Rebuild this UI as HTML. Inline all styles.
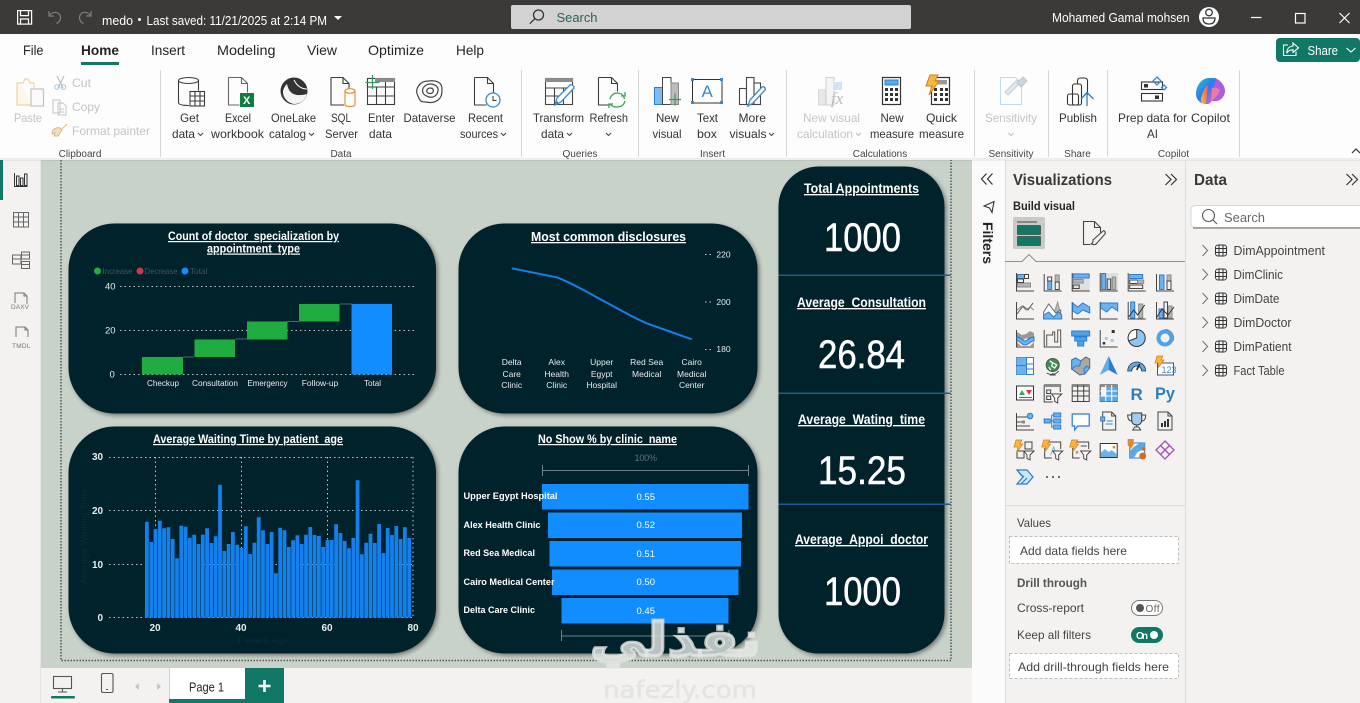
<!DOCTYPE html>
<html lang="en"><head><meta charset="utf-8"><title>medo - Power BI Desktop</title>
<style>
html,body{margin:0;padding:0;width:1360px;height:703px;overflow:hidden;background:#f3f2f1}
svg{display:block}
text{font-family:"Liberation Sans",sans-serif;fill:#323130;font-size:12px}
.m text{font-size:14px;fill:#252423}
.r text{font-size:12px;fill:#333;}
.d text{fill:#c4c4c4}
.gl text{font-size:10px;fill:#444;text-anchor:middle}
.k{fill:none;stroke:#444;stroke-width:1}
.bl{fill:#a9d3f2;stroke:#2b7cd3;stroke-width:1}
.bb{fill:#6db2ea;stroke:#2b7cd3;stroke-width:1}
.gr{fill:#b5b5b5;stroke:#8a8a8a;stroke-width:1}
.t{font-weight:bold;fill:#fff;text-decoration:underline;text-anchor:start}
.n{fill:#fff;font-size:40px;stroke:#fff;stroke-width:.5}
.w{fill:#e6ecee;font-size:8.5px;text-anchor:middle}
.grid{stroke:#b9c6ca;stroke-width:1;stroke-dasharray:1.5 3;fill:none}
.row text{font-size:12.5px;fill:#444}
</style></head><body>
<svg width="1360" height="703" viewBox="0 0 1360 703" xmlns="http://www.w3.org/2000/svg">
<defs>
<filter id="sh" x="-5%" y="-5%" width="112%" height="112%"><feDropShadow dx="2" dy="2" stdDeviation="2" flood-color="#000" flood-opacity=".42"/></filter>
<linearGradient id="cp" x1="0" y1="0" x2="1" y2="1"><stop offset="0" stop-color="#1fc3d8"/><stop offset=".45" stop-color="#2b7de9"/><stop offset=".75" stop-color="#b660e0"/><stop offset="1" stop-color="#f0788c"/></linearGradient>
<linearGradient id="cp2" x1="0" y1="1" x2="1" y2="0"><stop offset="0" stop-color="#f5c33c"/><stop offset=".5" stop-color="#f08a3c"/><stop offset="1" stop-color="#e0568c"/></linearGradient>
</defs>

<!-- backgrounds -->
<rect width="1360" height="703" fill="#f3f2f1"/>
<rect x="41" y="160" width="931" height="508" fill="#c8d2c9"/>
<rect x="972" y="160" width="33" height="543" fill="#fbfbfb"/>
<rect x="1005" y="160" width="180" height="543" fill="#f3f2f1"/>
<rect x="1005" y="160" width="1" height="543" fill="#dedddc"/>
<rect x="1185" y="160" width="1" height="543" fill="#dedddc"/>
<rect x="40" y="160" width="1" height="543" fill="#e4e4e2"/>

<!-- title bar -->
<rect width="1360" height="34" fill="#3b3a39"/>
<g fill="none" stroke="#fff" stroke-width="1.2"><rect x="17.6" y="10.6" width="14" height="13.5"/><path d="M20.5 10.6v5h8v-5M20.5 24v-5h8v5"/></g>
<g fill="none" stroke="#7c7b7a" stroke-width="1.3"><path d="M49 11v5h5M49.5 15.5c3-4 8-4 10-1s1 7-3 9"/><path d="M91 11v5h-5M90.5 15.5c-3-4-8-4-10-1s-1 7 3 9"/></g>
<text x="102" y="25" style="fill:#fff;font-size:12.5px" textLength="31" lengthAdjust="spacingAndGlyphs">medo</text>
<circle cx="139.500" cy="19.500" r="1.500" fill="#fff"/>
<text x="146.500" y="25" style="fill:#fff;font-size:12.5px" textLength="180.500" lengthAdjust="spacingAndGlyphs">Last saved: 11/21/2025 at 2:14 PM</text>
<path d="M334 16h8l-4 4z" fill="#fff"/>
<rect x="511" y="5" width="400" height="24" rx="2" fill="#d2d2d2"/>
<g fill="none" stroke="#333" stroke-width="1.300"><circle cx="538.500" cy="15" r="5"/><path d="M534.800 18.700l-5 5"/></g>
<text x="556.500" y="22" style="fill:#2b6157;font-size:13px" textLength="41" lengthAdjust="spacingAndGlyphs">Search</text>
<text x="1052" y="22" style="fill:#fff;font-size:12.5px" textLength="137.500" lengthAdjust="spacingAndGlyphs">Mohamed Gamal mohsen</text>
<circle cx="1209" cy="17" r="10" fill="#fff"/>
<g fill="none" stroke="#333" stroke-width="1.300"><circle cx="1209" cy="12.500" r="3.300"/><path d="M1203 18h12c0 5-3 6-6 6s-6-1-6-6z"/></g>
<g fill="none" stroke="#fff" stroke-width="1.200"><path d="M1251 17.500h10.500"/><rect x="1295.500" y="13.500" width="9.500" height="9.500"/><path d="M1339.500 13l10 10M1349.500 13l-10 10"/></g>

<!-- ribbon -->
<rect y="34" width="1360" height="126" fill="#fdfdfd"/>
<rect y="158" x="0" width="1360" height="3" fill="#000" opacity=".06"/>
<g class="m">
<text x="23" y="55" textLength="20.500" lengthAdjust="spacingAndGlyphs">File</text>
<text x="81" y="55" textLength="38" lengthAdjust="spacingAndGlyphs" style="font-weight:bold">Home</text>
<text x="151" y="55" textLength="34" lengthAdjust="spacingAndGlyphs">Insert</text>
<text x="217" y="55" textLength="58.500" lengthAdjust="spacingAndGlyphs">Modeling</text>
<text x="307" y="55" textLength="30" lengthAdjust="spacingAndGlyphs">View</text>
<text x="368" y="55" textLength="56" lengthAdjust="spacingAndGlyphs">Optimize</text>
<text x="456" y="55" textLength="28" lengthAdjust="spacingAndGlyphs">Help</text>
</g>
<rect x="81" y="62" width="38" height="3" fill="#117865"/>
<rect x="1276" y="38" width="84" height="24" rx="4" fill="#117865"/>
<g fill="none" stroke="#fff" stroke-width="1.100"><path d="M1288 45h-4.500v10.500h12.500v-4"/><path d="M1293 43l5.500 4.800-5.500 4.500v-2.500c-3 0-5 .8-6.200 3.500 0-4.500 2.500-7 6.200-7.300z"/><path d="M1346.500 48l4.500 4 4.500-4"/></g>
<text x="1307.500" y="55" style="fill:#fff;font-size:13px" textLength="30.500" lengthAdjust="spacingAndGlyphs">Share</text>
<g fill="#d6d6d5"><rect x="160" y="70" width="1" height="87"/><rect x="521" y="70" width="1" height="87"/><rect x="638" y="70" width="1" height="87"/><rect x="786" y="70" width="1" height="87"/><rect x="974" y="70" width="1" height="87"/><rect x="1048" y="70" width="1" height="87"/><rect x="1107" y="70" width="1" height="87"/><rect x="1239" y="70" width="1" height="87"/></g>
<path d="M1352 153l4-4 4 4" fill="none" stroke="#333" stroke-width="1.200"/>
<g class="gl">
<text x="80" y="157">Clipboard</text><text x="341" y="157">Data</text><text x="580" y="157">Queries</text><text x="712.500" y="157">Insert</text><text x="880" y="157">Calculations</text><text x="1011" y="157">Sensitivity</text><text x="1077.500" y="157">Share</text><text x="1173.500" y="157">Copilot</text>
</g>
<g class="d">
<text x="14" y="122" textLength="28" lengthAdjust="spacingAndGlyphs">Paste</text>
<text x="72" y="87" textLength="19" lengthAdjust="spacingAndGlyphs">Cut</text>
<text x="72" y="111" textLength="28" lengthAdjust="spacingAndGlyphs">Copy</text>
<text x="72" y="135" textLength="78" lengthAdjust="spacingAndGlyphs">Format painter</text>
<text x="803" y="122" textLength="57" lengthAdjust="spacingAndGlyphs">New visual</text>
<text x="797" y="138" textLength="56" lengthAdjust="spacingAndGlyphs">calculation</text>
<text x="985" y="122" textLength="52" lengthAdjust="spacingAndGlyphs">Sensitivity</text>
</g>
<g class="r">
<text x="180" y="122" textLength="19" lengthAdjust="spacingAndGlyphs">Get</text><text x="172" y="138" textLength="23" lengthAdjust="spacingAndGlyphs">data</text>
<text x="225" y="122" textLength="26" lengthAdjust="spacingAndGlyphs">Excel</text><text x="211" y="138" textLength="53" lengthAdjust="spacingAndGlyphs">workbook</text>
<text x="271" y="122" textLength="45" lengthAdjust="spacingAndGlyphs">OneLake</text><text x="269" y="138" textLength="37" lengthAdjust="spacingAndGlyphs">catalog</text>
<text x="331" y="122" textLength="20" lengthAdjust="spacingAndGlyphs">SQL</text><text x="325" y="138" textLength="33" lengthAdjust="spacingAndGlyphs">Server</text>
<text x="368" y="122" textLength="27" lengthAdjust="spacingAndGlyphs">Enter</text><text x="369" y="138" textLength="23" lengthAdjust="spacingAndGlyphs">data</text>
<text x="403.500" y="122" textLength="52" lengthAdjust="spacingAndGlyphs">Dataverse</text>
<text x="468" y="122" textLength="35" lengthAdjust="spacingAndGlyphs">Recent</text><text x="460" y="138" textLength="38" lengthAdjust="spacingAndGlyphs">sources</text>
<text x="533" y="122" textLength="51" lengthAdjust="spacingAndGlyphs">Transform</text><text x="541" y="138" textLength="23" lengthAdjust="spacingAndGlyphs">data</text>
<text x="589.500" y="122" textLength="38.500" lengthAdjust="spacingAndGlyphs">Refresh</text>
<text x="656" y="122" textLength="23" lengthAdjust="spacingAndGlyphs">New</text><text x="652.500" y="138" textLength="29" lengthAdjust="spacingAndGlyphs">visual</text>
<text x="697" y="122" textLength="21" lengthAdjust="spacingAndGlyphs">Text</text><text x="697" y="138" textLength="20" lengthAdjust="spacingAndGlyphs">box</text>
<text x="738.500" y="122" textLength="27.500" lengthAdjust="spacingAndGlyphs">More</text><text x="729.500" y="138" textLength="37" lengthAdjust="spacingAndGlyphs">visuals</text>
<text x="880.500" y="122" textLength="23" lengthAdjust="spacingAndGlyphs">New</text><text x="870" y="138" textLength="44" lengthAdjust="spacingAndGlyphs">measure</text>
<text x="926" y="122" textLength="31" lengthAdjust="spacingAndGlyphs">Quick</text><text x="919" y="138" textLength="45" lengthAdjust="spacingAndGlyphs">measure</text>
<text x="1059" y="122" textLength="38" lengthAdjust="spacingAndGlyphs">Publish</text>
<text x="1118" y="122" textLength="69" lengthAdjust="spacingAndGlyphs">Prep data for</text><text x="1147" y="138" textLength="11" lengthAdjust="spacingAndGlyphs">AI</text>
<text x="1191" y="122" textLength="39" lengthAdjust="spacingAndGlyphs">Copilot</text>
</g>
<g fill="none" stroke="#444" stroke-width="1">
<path d="M198 133l2.500 2.500 2.500-2.500M309 133l2.500 2.500 2.500-2.500M501 133l2.500 2.500 2.500-2.500M567 133l2.500 2.500 2.500-2.500M606 133l2.500 2.500 2.500-2.500M769 133l2.500 2.500 2.500-2.500"/>
<path d="M856 133l2.500 2.500 2.500-2.500M1008.500 133l2.500 2.500 2.500-2.500" stroke="#bbb"/>
</g>

<!-- clipboard icons -->
<g fill="none">
<path d="M20 83h-3v22h15" stroke="#f0d3a6" fill="#fdf7ec" stroke-width="1.200"/><path d="M20 83h3l2-4 3 0 2 4h4v6" stroke="#f0d3a6" stroke-width="1.200"/>
<rect x="31" y="89" width="12.500" height="17" fill="#fafafa" stroke="#c4c4c4" stroke-width="1.200"/>
<path d="M57 76l6 12M64 76l-6 12" stroke="#bcbcbc" stroke-width="1.200"/><circle cx="57" cy="87" r="2.300" stroke="#a4c8e8"/><circle cx="63.500" cy="87" r="2.300" stroke="#a4c8e8"/>
<path d="M53 100h7l0 13h-7zM58 103h5l3 3v9h-8z" stroke="#c4c4c4"/><path d="M60 109h4M60 112h4" stroke="#c4c4c4"/>
<path d="M62 129l5-5M53 130c2-2 5-3 7-2l2 2-4 6h-4l1-3-3 1z" stroke="#d9b98c" fill="#f0dfc4"/>
</g>

<!-- data icons -->
<g fill="none" stroke="#3c3c3c" stroke-width="1.100">
<ellipse cx="188.500" cy="80.500" rx="10" ry="3"/><path d="M178.500 80.500v22c0 2 4 3 10.500 3M198.500 80.500v10"/>
<rect x="190" y="91.500" width="14.500" height="14.500" fill="#fff"/><path d="M190 96h14.500M190 101h14.500M195 91.500v14.500M200 91.500v14.500"/>
<path d="M228.500 77.500h13l6 6v9M228.500 77.500v27.500h11M241.500 77.500v6h6" stroke="#666"/>
<path d="M331 77.500h12l6 6v5M331 77.500v27.500h13M343 77.500v6h6"/>
<path d="M474.500 77.500h13l6 6v9M474.500 77.500v27.500h12M487.500 77.500v6h6"/>
<path d="M598.500 77.500h13l6 6v8M598.500 77.500v27.500h11M611.500 77.500v6h6"/>
<rect x="367.500" y="78.500" width="27" height="26"/><path d="M367.500 87h27M367.500 96h27M376.500 87v18M385.500 78.500v26"/>
</g>
<rect x="240" y="93" width="14" height="14" fill="#107c41"/>
<text x="243" y="104" style="fill:#fff;font-size:11px;font-weight:bold">X</text>
<circle cx="294" cy="91" r="13.500" fill="#333"/>
<path d="M287 84c2 10 8 13 20 10-2 7-7 10-13 10-6-1-11-6-11-12 0-3 2-6 4-8z" fill="#fff" opacity=".95"/>
<path d="M294 80c3 6 7 9 13 9" stroke="#fff" stroke-width="1" fill="none"/>
<path d="M345 91c0-3 10-3 10 0v14c0 2-10 2-10 0zM345 91c0 3 10 3 10 0" fill="#fff" stroke="#e08a2c" stroke-width="1.100"/>
<rect x="375" y="78" width="20" height="4" fill="#8c8c8c"/>
<path d="M372.500 75v14M365.500 82.500h14" stroke="#2f9e5f" stroke-width="1.300"/>
<g fill="none" stroke="#444" stroke-width="1.200"><path d="M418 96c-4-7 2-15 10-15 8-1 14 1 14 8 0 4 0 8-4 11-4 3-8 3-12 2-4 0-6 0-8-6z"/><path d="M423 93c-2-5 3-9 7-9 5 0 9 3 8 7-1 5-5 7-9 6-3-1-5-2-6-4z"/><path d="M427 92c-1-3 2-4 3-4 3 0 4 2 3 4s-5 2-6 0z"/></g>
<circle cx="493" cy="100" r="7" fill="#fff" stroke="#3a8ac8" stroke-width="1.300"/><path d="M493 96v4.500h3.500" fill="none" stroke="#333"/>

<!-- queries -->
<g fill="none" stroke="#444" stroke-width="1.100"><rect x="545.500" y="78.500" width="27" height="26"/><path d="M545.500 88h27M545.500 96h20M554.500 88v16.500M563.500 88v16.500"/></g>
<rect x="545" y="78" width="28" height="4" fill="#8c8c8c"/>
<path d="M555 105l2-7 13-13c2-1 4 1 4 3l-13 14z" fill="#fff" stroke="#3a8ac8" stroke-width="1.300"/><path d="M556 103l2-1" stroke="#3a8ac8" stroke-width="2"/>
<g fill="none" stroke="#3fa35c" stroke-width="1.300"><path d="M610 99c1-4 4-6 7-6s5 1 6.500 3l1 3"/><path d="M625 101c-1 4-4 6-8 6s-5-1-7-3"/><path d="M621 96h4v-4M613 104h-4v4"/></g>

<!-- insert -->
<rect x="654.500" y="87.500" width="9" height="17" fill="#7dbcf0" stroke="#2b7cd3"/>
<rect x="662.500" y="77.500" width="8.500" height="27" fill="#fff" stroke="#444"/>
<rect x="671" y="83" width="7.500" height="21.500" fill="#bcbcbc" stroke="#888"/>
<path d="M675 93.500v12M669 99.500h12" stroke="#2f9e5f" stroke-width="1.200"/>
<rect x="692.500" y="79.500" width="29.500" height="23.500" fill="#fff" stroke="#333"/>
<g fill="#3a8ac8"><rect x="691" y="78" width="3" height="3"/><rect x="720" y="78" width="3" height="3"/><rect x="691" y="101" width="3" height="3"/><rect x="720" y="101" width="3" height="3"/></g>
<text x="701.500" y="97" style="fill:#3a8ac8;font-size:17px">A</text>
<g fill="#fff" stroke="#444" stroke-width="1.100"><rect x="739.500" y="88.500" width="7" height="16"/><rect x="746.500" y="77.500" width="7.500" height="27"/><rect x="754" y="83" width="6.500" height="21.500"/></g>
<path d="M748 106l2-6 12-13c2-1 4 1 3 3l-12 13z" fill="#fff" stroke="#3a8ac8" stroke-width="1.300"/>

<!-- calculations -->
<rect x="818.500" y="90" width="7" height="15" fill="#e8e8e8" stroke="#d8d8d8"/><rect x="826" y="77.500" width="8" height="27.500" fill="#f4f4f4" stroke="#d0d0d0"/><rect x="834" y="82" width="8" height="8" fill="#cfe5f7"/>
<text x="831" y="104" style="font-family:'Liberation Serif',serif;font-style:italic;font-size:17px;fill:#bdbdbd">fx</text>
<g fill="#fff" stroke="#333" stroke-width="1.200"><rect x="882.500" y="77.500" width="18" height="27"/><rect x="931.500" y="77.500" width="18" height="27"/></g>
<rect x="885" y="80" width="13" height="5" fill="#5aaae8" stroke="#2b7cd3"/><rect x="936" y="80" width="11" height="4.500" fill="#999"/>
<g fill="#333"><path d="M885 88h3v3h-3zM890 88h3v3h-3zM895 88h3v3h-3zM885 93h3v3h-3zM890 93h3v3h-3zM895 93h3v3h-3zM885 98h3v3h-3zM890 98h3v3h-3zM895 98h3v3h-3zM934 88h3v3h-3zM940 88h3v3h-3zM945 88h3v3h-3zM934 93h3v3h-3zM940 93h3v3h-3zM945 93h3v3h-3zM934 98h3v3h-3zM940 98h3v3h-3zM945 98h3v3h-3z"/></g>
<path d="M930 75h8l-3 6h4l-10 14 3-9h-6z" fill="#f5b83d" stroke="#d97a1f"/>

<!-- sensitivity -->
<path d="M1000.500 77.500h15l6 6v21h-21z" fill="#fdfdfd" stroke="#bcdcf2"/>
<path d="M1005 92l12-12 3 3-12 12zM1008 95l12-12" fill="#dfe8ee" stroke="#c5ced4"/><path d="M1017 83l6-6 4 4-6 6z" fill="#c9d6de" stroke="#bcc8cf"/>

<!-- publish -->
<g fill="#fff" stroke="#333" stroke-width="1.100"><rect x="1067.500" y="94" width="11" height="11" rx="2"/><rect x="1072.500" y="84" width="9" height="21" rx="2" fill="none"/><path d="M1077.500 84v-3c0-2 1-3 3-3h4c2 0 3 1 3 3v14" fill="none"/></g>
<path d="M1087 106V93M1081 99l6-6.500 6.500 6.500" fill="none" stroke="#2e7fb8" stroke-width="1.300"/>

<!-- prep data -->
<g fill="none" stroke="#333" stroke-width="1.100"><rect x="1141.500" y="82" width="21" height="7.500"/><rect x="1141.500" y="93.500" width="21" height="7.500"/></g>
<rect x="1144" y="84" width="4" height="3.500" fill="#333"/><rect x="1155" y="95.500" width="4" height="3.500" fill="#333"/>
<g fill="none" stroke="#3a8ac8" stroke-width="1.300"><path d="M1157 77l4 4-4 4-4-4zM1164 85l2.500 2.500-2.500 2.500-2.500-2.500z"/></g>
<!-- copilot -->
<path d="M1196 94c0-8 5-15 12-16h6c3 0 4 2 5 4l-8 20c-1 2-3 2-5 2-4 0-10-3-10-10z" fill="url(#cp)"/>
<path d="M1205 104c-2 0-4-2-4-4 0-5 3-10 5-14h2l-2 16c0 1 0 2-1 2z" fill="url(#cp2)"/>
<path d="M1212 78h3c5 2 10 7 10 13 0 6-5 10-9 10h-5l5-23z" fill="#a85ee0"/>
<path d="M1212 88c3-1 6 0 8 2-1 4-5 9-9 11z" fill="#ef7aa0"/>

<!-- left rail -->
<rect x="0" y="160" width="3" height="40" fill="#117865"/>
<g fill="none" stroke="#333" stroke-width="1"><path d="M14.500 173v13.500h13"/><rect x="16.500" y="176" width="2.500" height="9.500"/><rect x="20.500" y="178" width="2.500" height="7.500"/><rect x="24.500" y="174" width="2.500" height="11.500"/></g>
<g fill="none" stroke="#666" stroke-width="1"><rect x="13.500" y="212.500" width="15" height="14.500"/><path d="M13.500 217h15M13.500 222h15M18.500 212.500v14.500M23.500 212.500v14.500"/>
<rect x="12.500" y="255" width="8.500" height="9"/><rect x="21.500" y="252" width="8" height="7"/><rect x="21.500" y="261.500" width="8" height="7"/><path d="M12.500 259h8M21.500 255h8M21.500 264.500h8"/></g>
<g fill="none" stroke="#777" stroke-width="1"><path d="M15 303v-10h9l3 3v8M24 293v3h3"/><path d="M16 337v-10h9l3 3v7M25 327v3h3"/></g>
<text x="11" y="309" style="font-size:6.500px;fill:#777" textLength="18">DAXV</text>
<text x="12" y="348" style="font-size:6.500px;fill:#777" textLength="18.500">TMDL</text>

<!-- page border -->
<path d="M61 160V660.500H951V160" fill="none" stroke="#555" stroke-width="1.500" stroke-dasharray="1.500 1.500"/>

<!-- cards -->
<g fill="#02202a" filter="url(#sh)">
<rect x="68.500" y="223.500" width="367.500" height="190" rx="46"/>
<rect x="458.500" y="223.500" width="299" height="190" rx="46"/>
<rect x="68.500" y="426.500" width="367.500" height="227" rx="46"/>
<rect x="458.500" y="426.500" width="299" height="227" rx="46"/>
<rect x="778.500" y="166.500" width="166" height="487" rx="40"/>
</g>
<g fill="#1f5c93"><rect x="778.500" y="274.500" width="172" height="1.500"/><rect x="778.500" y="392.500" width="172" height="1.500"/><rect x="778.500" y="503.500" width="172" height="1.500"/></g>

<!-- card 1 -->
<text class="t" x="168" y="240" style="font-size:12px" textLength="171" lengthAdjust="spacingAndGlyphs">Count of doctor_specialization by</text>
<text class="t" x="207" y="252.500" style="font-size:12px" textLength="93" lengthAdjust="spacingAndGlyphs">appointment_type</text>
<circle cx="97.500" cy="271" r="3.500" fill="#1fad41"/><circle cx="140" cy="271" r="3.500" fill="#c8394f"/><circle cx="185" cy="271" r="3.500" fill="#118dff"/>
<g style="font-size:8px"><text x="102.500" y="274" style="fill:#3c5560;font-size:8.500px" textLength="30" lengthAdjust="spacingAndGlyphs">Increase</text><text x="144.500" y="274" style="fill:#3c5560;font-size:8.500px" textLength="33" lengthAdjust="spacingAndGlyphs">Decrease</text><text x="190" y="274" style="fill:#3c5560;font-size:8.500px" textLength="17.500" lengthAdjust="spacingAndGlyphs">Total</text></g>
<path class="grid" d="M120 286.500H414M120 330.500H414M120 374.500H414"/>
<g><text x="105" y="289.500" style="fill:#e6ecee;font-size:9.500px">40</text><text x="105" y="333.500" style="fill:#e6ecee;font-size:9.500px">20</text><text x="109.500" y="377.500" style="fill:#e6ecee;font-size:9.500px">0</text></g>
<path d="M183 357h11M235 339h12M287 321.500h12M340 304h12" stroke="#4c6670" stroke-width="1" fill="none"/>
<g fill="#1fad41"><rect x="142" y="357" width="41" height="17.500"/><rect x="194.500" y="339.500" width="40.500" height="17.500"/><rect x="247" y="321.500" width="40.500" height="18"/><rect x="299" y="304" width="40.500" height="17.500"/></g>
<rect x="351.500" y="304" width="40.500" height="70.500" fill="#118dff"/>
<g><text class="w" x="163" y="386" textLength="32" lengthAdjust="spacingAndGlyphs">Checkup</text><text class="w" x="215" y="386" textLength="46" lengthAdjust="spacingAndGlyphs">Consultation</text><text class="w" x="267.500" y="386" textLength="40" lengthAdjust="spacingAndGlyphs">Emergency</text><text class="w" x="320" y="386" textLength="36.500" lengthAdjust="spacingAndGlyphs">Follow-up</text><text class="w" x="372.500" y="386" textLength="17" lengthAdjust="spacingAndGlyphs">Total</text></g>

<!-- card 2 -->
<text class="t" x="531" y="241" style="font-size:13px" textLength="155" lengthAdjust="spacingAndGlyphs">Most common disclosures</text>
<path d="M511.700 268.300L556.700 277.300C572 283 587 292 601.700 300C617 308 632 317 646.700 323.300L691.700 339.300" fill="none" stroke="#1380ec" stroke-width="2"/>
<path class="grid" d="M705 254.500h6M705 302h6M705 349.500h6"/>
<text class="w" x="723.500" y="257.500">220</text><text class="w" x="723.500" y="305">200</text><text class="w" x="723.500" y="352">180</text>
<g>
<text class="w" x="511.700" y="365">Delta</text><text class="w" x="511.700" y="377">Care</text><text class="w" x="511.700" y="388">Clinic</text>
<text class="w" x="556.700" y="365">Alex</text><text class="w" x="556.700" y="377">Health</text><text class="w" x="556.700" y="388">Clinic</text>
<text class="w" x="601.700" y="365">Upper</text><text class="w" x="601.700" y="377">Egypt</text><text class="w" x="601.700" y="388">Hospital</text>
<text class="w" x="646.700" y="365">Red Sea</text><text class="w" x="646.700" y="377">Medical</text>
<text class="w" x="691.700" y="365">Cairo</text><text class="w" x="691.700" y="377">Medical</text><text class="w" x="691.700" y="388">Center</text>
</g>

<!-- card 3 -->
<text class="t" x="153" y="443" style="font-size:12px" textLength="190" lengthAdjust="spacingAndGlyphs">Average Waiting Time by patient_age</text>
<path class="grid" d="M109 457.500H413M109 510.500H413M109 564.500H413M109 617.500H413M155.500 457V618M241.500 457V618M327.500 457V618M413 457V618"/>
<g style="font-weight:bold"><text x="92" y="460" style="fill:#e8eef0;font-size:10px;font-weight:bold">30</text><text x="92" y="514" style="fill:#e8eef0;font-size:10px;font-weight:bold">20</text><text x="92" y="568" style="fill:#e8eef0;font-size:10px;font-weight:bold">10</text><text x="97.500" y="621" style="fill:#e8eef0;font-size:10px;font-weight:bold">0</text>
<text x="149.500" y="631" style="fill:#e8eef0;font-size:10px;font-weight:bold">20</text><text x="235.500" y="631" style="fill:#e8eef0;font-size:10px;font-weight:bold">40</text><text x="321.500" y="631" style="fill:#e8eef0;font-size:10px;font-weight:bold">60</text><text x="407.500" y="631" style="fill:#e8eef0;font-size:10px;font-weight:bold">80</text></g>
<text transform="translate(87 584) rotate(-90)" style="fill:#0e2c38;font-size:9px" textLength="95">Average Waiting Time</text>
<text x="238" y="643" style="fill:#0e2c38;font-size:9px" textLength="50">Patient Age</text>
<path fill="none" stroke="#1380ec" stroke-width="3.800" d="M146.900 617.700V521.700M151.200 617.700V542M155.500 617.700V529.300M159.800 617.700V520.700M164.100 617.700V528.300M168.400 617.700V527.300M172.700 617.700V539M177 617.700V558.300M181.300 617.700V525.700M185.600 617.700V526.700M189.900 617.700V537.700M194.200 617.700V534.700M198.500 617.700V544M202.800 617.700V534.700M207.100 617.700V528.300M211.400 617.700V543M215.700 617.700V536.300M220 617.700V484.700M224.300 617.700V551M228.600 617.700V544M232.900 617.700V532M237.200 617.700V544.700M241.500 617.700V548M245.800 617.700V526.300M250.100 617.700V554M254.400 617.700V542.700M258.700 617.700V517.300M263 617.700V530.300M267.300 617.700V544M271.600 617.700V532M275.900 617.700V573.300M280.200 617.700V527.700M284.500 617.700V530.300M288.800 617.700V547M293.100 617.700V540.300M297.400 617.700V535.300M301.700 617.700V544M306 617.700V534.700M310.300 617.700V527M314.600 617.700V535M318.900 617.700V536M323.200 617.700V547M327.500 617.700V540M331.800 617.700V540M336.100 617.700V524.300M340.400 617.700V533M344.700 617.700V541M349 617.700V548.300M353.300 617.700V538M357.600 617.700V480.300M361.900 617.700V554.300M366.200 617.700V542.700M370.500 617.700V533.700M374.800 617.700V543M379.100 617.700V524M383.400 617.700V553M387.700 617.700V528M392 617.700V535M396.300 617.700V526M400.600 617.700V539M404.900 617.700V527.300M409.200 617.700V538"/>

<!-- card 4 -->
<text class="t" x="538" y="443" style="font-size:12px" textLength="139" lengthAdjust="spacingAndGlyphs">No Show % by clinic_name</text>
<text x="634.500" y="461" style="fill:#5d7078;font-size:9px" textLength="22.500">100%</text>
<path d="M542.500 465v11M542.500 470.500H748.500M748.500 465v11" stroke="#6e8088" fill="none"/>
<g fill="#118dff"><rect x="542" y="484" width="206.500" height="25.500"/><rect x="548" y="512.500" width="194" height="25.500"/><rect x="549.500" y="541" width="191.500" height="25.500"/><rect x="552" y="569.500" width="186.500" height="25.500"/><rect x="561.500" y="598" width="167" height="25.500"/></g>
<path d="M561.500 630v11M561.500 636H729M729 630v11" stroke="#6e8088" fill="none"/>
<g><text x="463.500" y="499" style="fill:#fff;font-size:9.500px;font-weight:bold" textLength="94" lengthAdjust="spacingAndGlyphs">Upper Egypt Hospital</text>
<text x="463.500" y="528" style="fill:#fff;font-size:9.500px;font-weight:bold" textLength="77" lengthAdjust="spacingAndGlyphs">Alex Health Clinic</text>
<text x="463.500" y="556" style="fill:#fff;font-size:9.500px;font-weight:bold" textLength="71.500" lengthAdjust="spacingAndGlyphs">Red Sea Medical</text>
<text x="463.500" y="585" style="fill:#fff;font-size:9.500px;font-weight:bold" textLength="91" lengthAdjust="spacingAndGlyphs">Cairo Medical Center</text>
<text x="463.500" y="613" style="fill:#fff;font-size:9.500px;font-weight:bold" textLength="71.500" lengthAdjust="spacingAndGlyphs">Delta Care Clinic</text></g>
<g><text x="636.500" y="500" style="fill:#fff;font-size:9.500px">0.55</text><text x="636.500" y="528" style="fill:#fff;font-size:9.500px">0.52</text><text x="636.500" y="557" style="fill:#fff;font-size:9.500px">0.51</text><text x="636.500" y="585" style="fill:#fff;font-size:9.500px">0.50</text><text x="636.500" y="614" style="fill:#fff;font-size:9.500px">0.45</text></g>

<!-- KPI -->
<text class="t" x="804" y="193" style="font-size:13.500px" textLength="115" lengthAdjust="spacingAndGlyphs">Total Appointments</text>
<text class="n" x="824" y="251" textLength="77" lengthAdjust="spacingAndGlyphs">1000</text>
<text class="t" x="797" y="307" style="font-size:13.500px" textLength="129" lengthAdjust="spacingAndGlyphs">Average_Consultation</text>
<text class="n" x="818" y="368" textLength="87" lengthAdjust="spacingAndGlyphs">26.84</text>
<text class="t" x="798" y="424" style="font-size:13.500px" textLength="127" lengthAdjust="spacingAndGlyphs">Average_Wating_time</text>
<text class="n" x="818" y="484" textLength="88" lengthAdjust="spacingAndGlyphs">15.25</text>
<text class="t" x="795" y="544" style="font-size:13.500px" textLength="133" lengthAdjust="spacingAndGlyphs">Average_Appoi_doctor</text>
<text class="n" x="824" y="605" textLength="77" lengthAdjust="spacingAndGlyphs">1000</text>

<!-- bottom bar -->
<rect x="41" y="668" width="931" height="35" fill="#f3f2f1"/>
<g fill="none" stroke="#555" stroke-width="1.100"><rect x="53.500" y="676.500" width="18" height="12"/><path d="M62.500 688.500v3M58 692h9"/><rect x="101.500" y="673.500" width="11.500" height="19" rx="1.500"/></g>
<rect x="106" y="689" width="2" height="1" fill="#555"/>
<rect x="51" y="696" width="24" height="2.500" rx="1" fill="#117865"/>
<path d="M139 683l-4 3.500 4 3.500zM157 683l4 3.500-4 3.500z" fill="#c4c4c4"/>
<rect x="169" y="668" width="76" height="35" fill="#fff"/><rect x="169" y="668" width="1" height="35" fill="#d0d0d0"/><rect x="169" y="699" width="76" height="4" fill="#117865"/>
<text x="189" y="691.500" style="font-size:12.500px;fill:#252423" textLength="35" lengthAdjust="spacingAndGlyphs">Page 1</text>
<rect x="245" y="668" width="39" height="35" fill="#117865"/>
<path d="M264.500 680v12M258.500 686h12" stroke="#fff" stroke-width="2.600"/>

<!-- Watermark -->
<text transform="translate(761 656) scale(1.270 1.080)" style="font-family:'DejaVu Sans',sans-serif;font-size:44px;font-weight:bold;fill:#e2e5e2;fill-opacity:.82;stroke:#e2e5e2;stroke-opacity:.82;stroke-width:2.500px;direction:rtl">نفذلي</text>
<text x="603" y="698" style="font-family:'DejaVu Sans',sans-serif;font-size:24px;fill:#e4e4e3;stroke:#e4e4e3;stroke-width:.6px" textLength="154" lengthAdjust="spacingAndGlyphs">nafezly.com</text>

<!-- Filters pane -->
<path d="M986.500 173.500l-5 5.500 5 5.500M992.500 173.500l-5 5.500 5 5.500" fill="none" stroke="#333" stroke-width="1.200"/>
<path d="M984 206l10-4.500-2 11-2.500-4.500z" fill="none" stroke="#333" stroke-width="1.100"/>
<text transform="translate(983 222) rotate(90)" style="font-size:14px;font-weight:bold;fill:#252423" textLength="42" lengthAdjust="spacingAndGlyphs">Filters</text>

<!-- Visualizations -->
<text x="1013" y="185" style="font-size:16px;font-weight:bold;fill:#3a3938" textLength="99" lengthAdjust="spacingAndGlyphs">Visualizations</text>
<path d="M1165.500 174l5.500 5.500-5.500 5.500M1171 174l5.500 5.500-5.500 5.500M1346.500 174l5.500 5.500-5.500 5.500M1352 174l5.500 5.500-5.500 5.500" fill="none" stroke="#333" stroke-width="1.200"/>
<text x="1194" y="185" style="font-size:16px;font-weight:bold;fill:#3a3938" textLength="33" lengthAdjust="spacingAndGlyphs">Data</text>
<text x="1013" y="210" style="font-size:12px;font-weight:bold;fill:#252423" textLength="62" lengthAdjust="spacingAndGlyphs">Build visual</text>
<rect x="1013" y="217" width="32" height="32" rx="1.500" fill="#c9c9c9"/>
<path d="M1017 222h20" stroke="#444"/><rect x="1017.500" y="225.500" width="23" height="9" fill="#117865" stroke="#222" stroke-dasharray="1 1"/><rect x="1017.500" y="236.500" width="23" height="9" fill="#117865" stroke="#222" stroke-dasharray="1 1"/>
<g fill="none" stroke="#444" stroke-width="1.100"><path d="M1090 244.500h-6.500v-23h11l6 6v5M1094.500 221.500v6h6"/><path d="M1093 240l10-9c1-1 3 1 2 3l-8 9c-1 2-4 2-6 1 2-1 2-2 2-4z"/></g>
<path d="M1005 261.500h17l7-7 7 7h149" fill="none" stroke="#8f8f8f"/>

<!-- viz icons row 1 -->
<g transform="translate(1025 282)"><path class="k" d="M-8.500-9V9H9"/><rect class="bb" x="-7.500" y="-7.500" width="7" height="4"/><rect class="k" x="-.5" y="-7.500" width="4" height="4"/><rect class="gr" x="-7.500" y="1" width="13" height="4"/><rect class="k" x="-7.500" y="-3" width="6" height="3.500"/></g>
<g transform="translate(1052.700 282)"><path class="k" d="M-8.500-8V9H9"/><rect class="bb" x="-5" y="-1" width="4" height="8.500"/><rect class="k" x="-5" y="-5" width="4" height="4"/><rect class="gr" x="2.500" y="-7" width="4" height="7"/><rect class="k" x="2.500" y="0" width="4" height="7.500"/></g>
<g transform="translate(1080.700 282)"><rect x="-9" y="-9" width="18" height="18" fill="#d8d8d8" opacity=".7"/><path class="k" d="M-8.500-9V9H9"/><rect class="bb" x="-7.500" y="-8" width="16" height="4"/><rect class="gr" x="-7.500" y="-2.500" width="10" height="3.500"/><rect class="k" x="-7.500" y="3" width="6" height="3.500" fill="#fff"/></g>
<g transform="translate(1108.700 282)"><rect x="-9" y="-9" width="18" height="18" fill="#d8d8d8" opacity=".7"/><path class="k" d="M-8.500-9V9H9"/><rect class="bb" x="-7" y="-8.500" width="4" height="16"/><rect class="k" x="-1.500" y="-3" width="3.500" height="10.500"/><rect class="gr" x="3.500" y="-5" width="3.500" height="12.500"/></g>
<g transform="translate(1136.700 282)"><path class="k" d="M-8.500-9V9H9"/><rect class="bb" x="-7" y="-7.500" width="13" height="4"/><rect class="k" x="-7" y="-2" width="8" height="3.500"/><rect class="gr" x="1" y="-2" width="6" height="3.500"/><rect class="k" x="-7" y="3" width="13" height="3.500"/></g>
<g transform="translate(1165 282)"><path class="k" d="M-8.500-8V9H9"/><rect class="bb" x="-5.500" y="-7" width="4.500" height="14.500"/><rect class="gr" x="2" y="-7" width="4" height="6"/><rect class="k" x="2" y="-1" width="4" height="8.500"/></g>
<!-- row 2 -->
<g transform="translate(1025 310)"><path class="k" d="M-8.500-8V9H9"/><path d="M-8 4l6-8 5 4 5-7" fill="none" stroke="#555"/><path d="M-8 0l5-4 4 4 4-3 4 3" fill="none" stroke="#888"/></g>
<g transform="translate(1052.700 310)"><path d="M-9 9l5-11 5 6 4-12 4 17z" fill="#b5b5b5" stroke="#999"/><path d="M-9 9v-7l5-8 7 9 5-3v9z" fill="#fff" stroke="#666"/><path d="M-9 9v-4l5-3 5 5 5-5 3 3v4z" fill="#6db2ea" stroke="#2b7cd3"/></g>
<g transform="translate(1080.700 310)"><path class="k" d="M-8.500-8V9H9"/><path d="M-8 -7l5 4 5-4 7 4V3l-7-3-5 4-5-3z" fill="#6db2ea" stroke="#2b7cd3"/></g>
<g transform="translate(1108.700 310)"><path class="k" d="M-8.500-8V9H9"/><path d="M-8-7H9V1L3-3-2 2-8-2z" fill="#6db2ea" stroke="#2b7cd3"/></g>
<g transform="translate(1136.700 310)"><path class="k" d="M-8.500-8V9H9"/><rect class="bb" x="-6" y="-8" width="4" height="16"/><rect class="gr" x="2" y="-6" width="4" height="14"/><path d="M-8 7l5-7 4 5 7-10" fill="none" stroke="#333"/></g>
<g transform="translate(1165 310)"><path class="k" d="M-8.500-8V9H9"/><rect class="bb" x="-6" y="-1" width="4" height="9"/><rect class="gr" x="3" y="-4" width="4" height="12"/><rect class="k" x="-1" y="-8" width="3.500" height="16"/><path d="M-8 7l5-8 6 6 6-8" fill="none" stroke="#333"/></g>
<!-- row 3 -->
<g transform="translate(1025 338)"><path class="k" d="M-8.500-8V9H9"/><path d="M-8-6l5 3 4-1 4-3 4 2V1L5 3 1 0-3 3-8 1z" fill="#999"/><path d="M-8-1c4 0 5 4 8 4s4-4 9-4V3C5 3 4 7 0 7S-4 3-8 3z" fill="#6db2ea" stroke="#2b7cd3"/><path d="M-8 4l4 4h-4zM9 4L5 8h4z" fill="#e08a2c"/></g>
<g transform="translate(1052.700 338)"><path class="k" d="M-8.500-8V9H9"/><path d="M-6 8V-3H0V-6h2v10H5V-8H8V8" fill="none" stroke="#555"/></g>
<g transform="translate(1080.700 338)"><path d="M-9-7H9V-2H-9zM-6-1H6V3H-6zM-3 3H3V8H-3z" fill="#4ea3e6" stroke="#2b7cd3"/></g>
<g transform="translate(1108.700 338)"><path class="k" d="M-8.500-8V9H9"/><g fill="#9fcdf0"><rect x="-4" y="-1" width="3" height="3"/><rect x="2" y="1" width="3" height="3"/></g><g fill="#333"><rect x="3" y="-8" width="3" height="3"/><rect x="-6" y="4" width="2.500" height="2.500"/></g></g>
<g transform="translate(1136.700 338)"><circle r="8.500" fill="#8ec4ee" stroke="#333"/><path d="M0 0V-8.500A8.500 8.500 0 0 0 -8 3z" fill="#fff" stroke="#333" stroke-width="1"/></g>
<g transform="translate(1165 338)"><circle r="6.500" fill="none" stroke="#4ea3e6" stroke-width="4"/><path d="M0-8.500A8.500 8.500 0 0 1 8 3" stroke="#888" stroke-width="1" fill="none"/></g>
<!-- row 4 -->
<g transform="translate(1025 366)"><rect x="-8.500" y="-8.500" width="17" height="17" fill="#fff" stroke="#2b7cd3"/><rect x="-8.500" y="-8.500" width="10" height="8" fill="#6db2ea"/><rect x="-8.500" y="0" width="10" height="8.500" fill="#6db2ea"/><path d="M1.500-8.500V8.500M1.500-2H8.500M1.500 3H8.500M-8.500-.5H1.500" stroke="#2b7cd3" fill="none"/></g>
<g transform="translate(1052.700 366)"><circle cy="-1" r="6.500" fill="#3d8f4f" stroke="#555"/><path d="M-3-5l3 2-1 3 3 2 2-3zM-4 1l2 3" stroke="#fff" stroke-width="1.200" fill="none"/><path d="M-6 7a9 9 0 0 0 12-2M0 7v2M-3 9H3" stroke="#444" fill="none"/></g>
<g transform="translate(1080.700 366)"><path d="M-9-6l4-2 5 3 5-4 4 2V2L4 8-1 9-5 6-9 3z" fill="#a8a8a8" stroke="#666"/><path d="M-9-6l4-2 5 3-1 5-4 0-4 3zM4 8l-1-5 3-3 3 2z" fill="#6db2ea" stroke="#2b7cd3"/></g>
<g transform="translate(1108.700 366)"><path d="M0-10L-9 9l9-5z" fill="#5eb0ea"/><path d="M0-10L9 9 0 4z" fill="#2b7cd3"/></g>
<g transform="translate(1136.700 366)"><path d="M-9 5a9 9 0 0 1 18 0H5a5 5 0 0 0-10 0z" fill="#5aa9e6" stroke="#333" stroke-width=".8"/><path d="M0 4l3-6" stroke="#222" stroke-width="1.500"/></g>
<g transform="translate(1165 366)"><rect x="-7.500" y="-3" width="16" height="12" fill="#fff" stroke="#555"/><path d="M-8-10h6l-2 4h3l-6 8 1-5h-4z" fill="#f5b83d" stroke="#d97a1f" stroke-width=".7"/><text x="-3.500" y="7" style="font-size:9px;fill:#3a8ac8">123</text></g>
<!-- row 5 -->
<g transform="translate(1025 393)"><rect x="-8.500" y="-7" width="17" height="14" fill="#fff" stroke="#333"/><path d="M-6 2l3-5 3 5z" fill="#3aa860"/><path d="M1-3h6L4 2z" fill="#d8344a"/><path d="M-6 4.500H7" stroke="#666"/></g>
<g transform="translate(1052.700 393)"><path class="k" d="M-8.500-8h16v7M-8.500-8V9H0"/><rect x="-8.500" y="-9" width="17" height="3" fill="#8a8a8a"/><rect class="k" x="-6" y="-3" width="4" height="3.500"/><rect class="k" x="-6" y="3" width="4" height="3.500"/><path d="M-1 1H9L5 5V10L2 8.500V5z" fill="#fff" stroke="#444"/></g>
<g transform="translate(1080.700 393)"><rect class="k" x="-8.500" y="-8" width="17" height="16.500"/><rect x="-8.500" y="-9" width="17" height="3" fill="#8a8a8a"/><path class="k" d="M-8.500-2H8.500M-8.500 3H8.500M-3-8V8.500M3-8V8.500"/></g>
<g transform="translate(1108.700 393)"><rect class="k" x="-8.500" y="-8" width="17" height="16.500"/><rect x="-8.500" y="-9" width="17" height="3" fill="#8a8a8a"/><rect x="-2.500" y="-6" width="11" height="14.500" fill="#5aa9e6"/><rect x="-8.500" y="3" width="17" height="5.500" fill="#5aa9e6"/><path d="M-8.500-2H8.500M-8.500 3H8.500M-3-8V8.500M3-8V8.500" stroke="#fff" fill="none"/></g>
<text x="1130.500" y="400" style="font-size:17px;font-weight:bold;fill:#2e7fb8">R</text>
<text x="1155" y="399" style="font-size:17px;font-weight:bold;fill:#2e7fb8" textLength="20" lengthAdjust="spacingAndGlyphs">Py</text>
<!-- row 6 -->
<g transform="translate(1025 421)"><path class="k" d="M-8.500-8V9H9M-8-4H3M-8 1H-1M-8 5H5"/><circle cx="5" cy="-5" r="2.800" fill="#6db2ea" stroke="#2b7cd3"/><rect x="-3" y="-.5" width="3" height="3" fill="#888"/></g>
<g transform="translate(1052.700 421)" stroke="#2b7cd3" fill="#6db2ea"><rect x="-8.500" y="-2" width="6" height="4"/><rect x="1" y="-8" width="7" height="4"/><rect x="1" y="-2" width="7" height="4"/><rect x="1" y="4" width="7" height="4"/><path d="M-2.500 0H1M-1-6V6H1M-1-6H1" fill="none"/></g>
<g transform="translate(1080.700 421)"><path d="M-8.500-7H8.500V5H-3L-6 9V5H-8.500z" fill="#fff" stroke="#2b7cd3" stroke-width="1.200"/></g>
<g transform="translate(1108.700 421)"><path class="k" d="M-6-9H3L7-5V9H-6zM3-9V-5H7"/><rect x="-8" y="-4" width="4" height="4" fill="#6db2ea" stroke="#2b7cd3"/><path d="M-2 0H4M-3 3H4" stroke="#3a8ac8"/></g>
<g transform="translate(1136.700 421)"><path d="M-5-8H5V-1C5 3 2 4 0 4S-5 3-5-1z" fill="#9fcdf0" stroke="#333"/><path class="k" d="M-5-6H-9C-9-1-7 0-5 0M5-6H9C9-1 7 0 5 0M0 4V6M-4 9H4L2 6H-2z"/></g>
<g transform="translate(1165 421)"><path d="M-7-9H3L7-5V9H-7z" fill="#f0f0f0" stroke="#444"/><path class="k" d="M3-9V-5H7"/><path d="M-4 6V2H-2V6zM-1 6V0H1V6zM2 6V-2H4V6z" fill="#333"/></g>
<!-- row 7 -->
<g transform="translate(1025 450)"><rect class="k" x="0" y="-8" width="7" height="7"/><rect class="k" x="-8" y="1" width="7" height="7"/><path d="M-9-10h6l-2 4h3l-6 8 1-5h-4z" fill="#f5b83d" stroke="#d97a1f" stroke-width=".7"/><path d="M-1 1H9L5 5V10L2 8.500V5z" fill="#fff" stroke="#444"/></g>
<g transform="translate(1052.700 450)"><path class="k" d="M-4-8H8V-1M-8-2V8H-1"/><path d="M-2 5L1-3 4 5" fill="none" stroke="#6db2ea"/><path d="M-9-10h6l-2 4h3l-6 8 1-5h-4z" fill="#f5b83d" stroke="#d97a1f" stroke-width=".7"/><path d="M0 1H10L6 5V10L3 8.500V5z" fill="#fff" stroke="#444"/></g>
<g transform="translate(1080.700 450)"><path class="k" d="M-4-8H8V-1M-8-2V8H-1M0-4H6"/><rect x="-5" y="1" width="2.500" height="2.500" fill="#999"/><path d="M-9-10h6l-2 4h3l-6 8 1-5h-4z" fill="#f5b83d" stroke="#d97a1f" stroke-width=".7"/><path d="M0 1H10L6 5V10L3 8.500V5z" fill="#fff" stroke="#444"/></g>
<g transform="translate(1108.700 450)"><rect x="-8.500" y="-6.500" width="17" height="14" fill="#fff" stroke="#333"/><path d="M-8 7V3l4-4 4 3 3-2 5 4v3z" fill="#6db2ea"/><rect x="4" y="-4" width="2.500" height="2.500" fill="#e08a2c"/></g>
<g transform="translate(1136.700 450)"><path d="M-7-7H8V8H-7z" fill="#fff" stroke="#2b7cd3"/><path d="M-3-3L3-7H8V-1L1 2-3 8H-7V1z" fill="#5aa9e6"/><path d="M-9-11H-3V-5L-6-1-9-5z" fill="#e08a2c"/><circle cx="6" cy="6" r="3.500" fill="#d9691f"/><circle cx="7" cy="-1" r="1.800" fill="#d9691f"/></g>
<g transform="translate(1165 450)" fill="none" stroke="#a34fb8" stroke-width="1.300"><path d="M0-9L9 0 0 9-9 0z"/><path d="M-4.500-4.500L4.500 4.500M4.500-4.500L-4.500 4.500"/></g>
<!-- row 8 -->
<g transform="translate(1025 477)" fill="#cfe6f8" stroke="#2b7cd3" stroke-width="1.200"><path d="M-8-7H2L8 0 2 7H-8L-2 0zM-5-3l4 3"/><path d="M-8-7L-2 0M-4 7L2 1" fill="none"/></g>
<g fill="#444"><circle cx="1047" cy="477" r="1"/><circle cx="1053" cy="477" r="1"/><circle cx="1059" cy="477" r="1"/></g>

<!-- field wells -->
<path d="M1006 505.500h179" stroke="#dcdcdc"/>
<text x="1017" y="527" style="font-size:12px;fill:#444" textLength="34" lengthAdjust="spacingAndGlyphs">Values</text>
<rect x="1009.500" y="536.500" width="169" height="27" fill="#fff" stroke="#bdbdbd" stroke-dasharray="3 2"/>
<text x="1020" y="555" style="font-size:12px;fill:#444" textLength="107" lengthAdjust="spacingAndGlyphs">Add data fields here</text>
<text x="1017" y="587" style="font-size:12px;font-weight:bold;fill:#555" textLength="70" lengthAdjust="spacingAndGlyphs">Drill through</text>
<text x="1017" y="612" style="font-size:12px;fill:#444" textLength="67" lengthAdjust="spacingAndGlyphs">Cross-report</text>
<text x="1017" y="639" style="font-size:12px;fill:#444" textLength="74" lengthAdjust="spacingAndGlyphs">Keep all filters</text>
<rect x="1131.500" y="600.500" width="31" height="15" rx="7.500" fill="#fff" stroke="#777"/><circle cx="1140" cy="608" r="4" fill="#555"/>
<text x="1145.500" y="612" style="font-size:10px;fill:#666" textLength="14">Off</text>
<rect x="1131" y="627" width="32" height="16" rx="8" fill="#117865"/><circle cx="1154" cy="635" r="4" fill="#fff"/>
<text x="1136" y="639" style="font-size:10px;fill:#fff;font-weight:bold" textLength="12">On</text>
<rect x="1009.500" y="653.500" width="169" height="25" fill="#fff" stroke="#bdbdbd" stroke-dasharray="3 2"/>
<text x="1018" y="671" style="font-size:12px;fill:#444" textLength="151" lengthAdjust="spacingAndGlyphs">Add drill-through fields here</text>

<!-- data pane -->
<path d="M1360 205.500H1195a4 4 0 0 0-4 4v14a4 4 0 0 0 4 4h165" fill="#fff" stroke="#d5d5d5"/>
<path d="M1193 228H1360" stroke="#666"/>
<g fill="none" stroke="#555" stroke-width="1.100"><circle cx="1208.500" cy="215.500" r="6"/><path d="M1213 220l4 4"/></g>
<text x="1224" y="222" style="font-size:13px;fill:#666" textLength="41" lengthAdjust="spacingAndGlyphs">Search</text>
<g fill="none" stroke="#777" stroke-width="1.100"><path d="M1202.500 245l5 5.500-5 5.500M1202.500 269l5 5.500-5 5.500M1202.500 293l5 5.500-5 5.500M1202.500 317l5 5.500-5 5.500M1202.500 341l5 5.500-5 5.500M1202.500 365l5 5.500-5 5.500"/></g>
<g fill="none" stroke="#333" stroke-width="1"><rect x="1215.500" y="245" width="11" height="11" rx="2.500"/><path d="M1215.500 248.500h11M1215.500 252.500h11M1219 245v11M1223 245v11"/>
<rect x="1215.500" y="269" width="11" height="11" rx="2.500"/><path d="M1215.500 272.500h11M1215.500 276.500h11M1219 269v11M1223 269v11"/>
<rect x="1215.500" y="293" width="11" height="11" rx="2.500"/><path d="M1215.500 296.500h11M1215.500 300.500h11M1219 293v11M1223 293v11"/>
<rect x="1215.500" y="317" width="11" height="11" rx="2.500"/><path d="M1215.500 320.500h11M1215.500 324.500h11M1219 317v11M1223 317v11"/>
<rect x="1215.500" y="341" width="11" height="11" rx="2.500"/><path d="M1215.500 344.500h11M1215.500 348.500h11M1219 341v11M1223 341v11"/>
<rect x="1215.500" y="365" width="11" height="11" rx="2.500"/><path d="M1215.500 368.500h11M1215.500 372.500h11M1219 365v11M1223 365v11"/></g>
<g class="row">
<text x="1233.500" y="255" textLength="91.500" lengthAdjust="spacingAndGlyphs">DimAppointment</text>
<text x="1233.500" y="279" textLength="49.500" lengthAdjust="spacingAndGlyphs">DimClinic</text>
<text x="1233.500" y="303" textLength="46" lengthAdjust="spacingAndGlyphs">DimDate</text>
<text x="1233.500" y="327" textLength="58" lengthAdjust="spacingAndGlyphs">DimDoctor</text>
<text x="1233.500" y="351" textLength="58" lengthAdjust="spacingAndGlyphs">DimPatient</text>
<text x="1233.500" y="375" textLength="51" lengthAdjust="spacingAndGlyphs">Fact Table</text>
</g>
</svg>
</body></html>
